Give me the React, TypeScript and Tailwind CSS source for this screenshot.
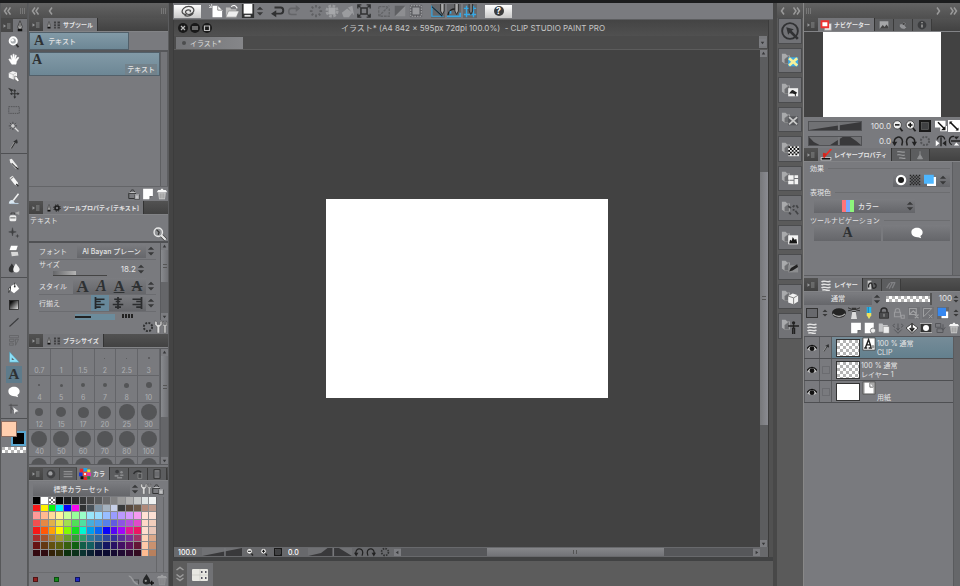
import React, { useState } from "react";
import clsx from "clsx";

const INK = "#303132";

const icons: Record<string, React.ReactNode> = {
  menu: (
    <>
      <path d="M1 4.500v7l5-3.500z" fill="#98999b" />
      <path d="M8 4h7M8 8h7M8 12h7" stroke="#98999b" strokeWidth="1.600" />
    </>
  ),
  magnifier: (
    <>
      <path d="M10 10l4 5" stroke={INK} strokeWidth="2.6" />
      <circle cx="7" cy="6.5" r="4.800" fill="#a9adb0" stroke="#fff" strokeWidth="2.600" />
      <circle cx="6" cy="5.5" r="1.8" fill="#fff" />
    </>
  ),
  hand: (
    <path
      d="M5 15L1 8.500l1.500-.800L5 9.500 3.500 3.500l1.400-.500 1.700 4.500V1.500h1.600v5.700l1.600-4.700 1.500.500L10 8.500l3.400-3.200 1.200 1L11.500 11l-.800 4z"
      fill="#fff"
      stroke="#fff"
      strokeWidth=".600"
    />
  ),
  cube: (
    <>
      <path d="M1 4l5-2.500L12 3v7l-5 2.500L1 10z" fill="#f4f4f4" />
      <path d="M1 4l6 2 5-3M7 6v6" stroke="#aaa" strokeWidth=".8" />
      <path d="M9 8l3 1 3 5-2 1.500-4-3z" fill="#fff" stroke="#555" strokeWidth=".8" />
    </>
  ),
  move: (
    <>
      <path d="M0 1l8 3-3 1.500 1 3z" fill={INK} />
      <path d="M9 4v10M4 9h10" stroke={INK} strokeWidth="1.300" />
      <path d="M9 2.500L7 5.500h4zM9 15.500l-2-3h4zM2.500 9l3-2v4zM15.500 9l-3-2v4z" fill={INK} />
    </>
  ),
  marquee: <path d="M1 3.500h14v9H1z" stroke="#4a4b4d" strokeDasharray="2 1" />,
  wand: (
    <>
      <path d="M6.500 1v11M1 6.500h11M2.500 2.500l8 8M10.500 2.500l-8 8" stroke="#3d3e40" />
      <circle cx="6.500" cy="6.500" r="2.400" fill="#ccc" />
      <path d="M9 9l5 5" stroke="#ddd" strokeWidth="1.6" />
    </>
  ),
  dropper: (
    <>
      <path d="M4 14l5-8" stroke="#aaa" strokeWidth="2" />
      <path d="M4.500 14l5-8" stroke={INK} strokeWidth="1.400" />
      <path d="M7 4.500l5 3 1-2-1-4-3 2z" fill={INK} />
    </>
  ),
  pen: (
    <>
      <path d="M2 2l3-1 7 9 2 5-4-1L3 6z" fill="#eee" />
      <path d="M5 7l5 5" stroke={INK} strokeWidth="1.400" />
      <path d="M10 12l4 3" stroke="#222" strokeWidth="1.500" />
    </>
  ),
  pencil: (
    <>
      <path d="M2 4l4-3 7 9 1 5-5-2z" fill="#f6f6f6" />
      <path d="M2.500 6.500l4.500-4" stroke="#888" strokeWidth="1.5" />
      <path d="M11 12l3 3" stroke={INK} strokeWidth="1.800" />
    </>
  ),
  brush: (
    <>
      <path d="M14 1L7 10" stroke="#f2f2f2" strokeWidth="2" />
      <path d="M1 14c1-5 4-5 6-4l2 3c-2 2-5 2-8 1z" fill="#dce9f3" />
      <path d="M4 14h10" stroke="#b8cbdb" strokeWidth="1.500" />
    </>
  ),
  airbrush: (
    <>
      <rect x="2" y="7" width="9" height="8" rx="2" fill="#eee" />
      <path d="M4 6V4h5v2M3 10.500h7" stroke={INK} />
      <path d="M9 4l6-2.500v5z" fill="#a9a9a9" />
    </>
  ),
  sparkle: (
    <>
      <path d="M6 1l1 4.500 4 1-4 1L6 12l-1-4.500-4-1 4-1z" fill="#3f4042" stroke="#3f4042" strokeWidth=".600" />
      <path d="M12.500 9l.700 2.300 2.300.700-2.300.700-.700 2.300-.700-2.300L9.500 12l2.300-.700z" fill="#3f4042" />
    </>
  ),
  eraser: (
    <>
      <path d="M4 1h9l-2 6H2z" fill="#fff" />
      <path d="M4 9h9l1 5-9 1z" fill="#d8d8d8" />
      <path d="M2 8h11" stroke="#666" />
    </>
  ),
  blend: (
    <>
      <path d="M5 2c3 4 4 6 4 8s-2 4-4 4-4-1-4-4 2-4 4-8z" fill={INK} />
      <path d="M10.500 2c3 4 5 6 5 8s-2 4-4.500 4-4-1-4-4 2-5 3.500-8z" fill="#f1f1f1" />
    </>
  ),
  bucket: (
    <>
      <path d="M3 6l7-4 5 7-7 6-4-3z" fill="#fff" />
      <path d="M9 5V1M3.500 6C0 9 0 11 1 14l2-4z" stroke={INK} strokeWidth="1.200" fill="#eee" />
      <circle cx="9" cy="6" r="1.200" fill={INK} />
    </>
  ),
  gradient: <rect x="2" y="2" width="12" height="12" fill="url(#toolGradient)" stroke="#222" />,
  line: <path d="M2 14L14 3" stroke="#3a3b3d" strokeWidth="1.400" />,
  frame: <path d="M2 2h12v3H2zM2 7h6v3H2zM2 12h5v3H2zM10 7h4l-4 8z" stroke="#606164" />,
  ruler: (
    <>
      <path d="M2 1v14h13z" fill="#8be0f8" stroke="#458da5" strokeWidth=".6" />
      <path d="M5 8.500V12h3.500z" fill="#5c6a70" />
    </>
  ),
  balloon: (
    <path d="M8 1c4 0 7.500 2.500 7.500 6 0 2.500-1 4-3 5l1 3-4-1.500C4 14 .500 11 .500 7s3.500-6 7.500-6z" fill="#fff" />
  ),
  vector: (
    <>
      <path d="M1 3h12M4 1v13M4 6l7 8" stroke="#454648" />
      <path d="M7 5.500l7 5.500-3.500.5-2 3z" fill="#eee" />
    </>
  ),
  lockbox: (
    <>
      <path d="M1 7h9v7H1zM3 7c0-6 6-6 6 0M9 9h6v6H9z" stroke={INK} strokeWidth="1.300" />
      <path d="M9 8h6v7H9z" fill="#9c9da0" />
      <path d="M2 6h8M11 10v4M13 10v4" stroke="#ddd" />
    </>
  ),
  page: (
    <>
      <path d="M1.500 1h13v9l-5 5h-8z" fill="#fff" />
      <path d="M10 15v-4.500h4.500z" fill="#67686b" />
    </>
  ),
  trash: (
    <>
      <path d="M3 6h10l-1 9H4z" fill="#cfcfcf" />
      <path d="M1 5.500h14l-2-3h-3L9 1H7L6 2.500H3z" fill="#f4f4f4" />
      <path d="M5.500 7v7M8 7v7M10.500 7v7" stroke="#777" />
    </>
  ),
  wrench: (
    <>
      <path d="M9 9l5.500 5.500" stroke="#333" strokeWidth="4" />
      <path d="M9 9l5.500 5.500" stroke="#e5e5e5" strokeWidth="2.500" />
      <circle cx="6" cy="6" r="4.800" stroke="#e6e6e6" strokeWidth="1.600" fill="#8f9194" />
      <path d="M4 3l3 3-1 3" stroke="#3a3a3a" strokeWidth="1.500" />
    </>
  ),
  spanner: (
    <>
      <path d="M1 1v4l2.500 3v7h3V8L9 5V1L7 2v3H3.500V2z" fill="#dedede" stroke="#444" strokeWidth=".500" />
      <path d="M11 1c-2 2-2 5 0 6v8h3V7c2-1 2-4 0-6v4h-3z" fill="#bdbdbd" stroke="#444" strokeWidth=".500" />
    </>
  ),
  ring: <circle cx="8" cy="8" r="5.500" stroke={INK} strokeWidth="2.600" strokeDasharray="2.600 1.700" />,
  gear: (
    <>
      <circle cx="8" cy="8" r="4" stroke="#1c1c1c" strokeWidth="3" />
      <circle cx="8" cy="8" r="6.500" stroke="#1c1c1c" strokeWidth="2" strokeDasharray="2.500 2.600" />
    </>
  ),
  grid: (
    <path
      d="M2 1h4v4H2zM9 1h5v4H9zM2 6.500h4v4H2zM9 6.500h5v4H9zM2 12h4v3H2zM9 12h5v3H9z"
      fill="#38393b"
      stroke="#66676a"
      strokeWidth=".600"
    />
  ),
  nib: (
    <>
      <path d="M8 1L5 9l1 3h4l1-3zM8 5v4" fill="#aaa" stroke="#333" />
      <path d="M5 12h6v3H5z" fill="#111" />
    </>
  ),
  newFile: (
    <>
      <path d="M4 2h6l5 5v8H4z" fill="#fff" />
      <path d="M10 2v5h5" stroke="#777" />
      <path d="M0 1l3 3M3 0v3M0 4h3" stroke="#ddd" />
    </>
  ),
  open: (
    <>
      <path d="M1 4h5l1 2h6v9H1z" fill="#bcbcbc" />
      <path d="M1 15l3-7h12l-3 7z" fill="#eee" stroke="#777" strokeWidth=".600" />
      <path d="M7 3c3-2 5-2 7 2" stroke="#fff" strokeWidth="1.300" />
    </>
  ),
  save: (
    <>
      <path d="M1 0h14v16H1z" fill={INK} />
      <path d="M3 0h10v11H3z" fill="#fff" />
      <path d="M4 13.500h7" stroke="#ddd" strokeWidth="2" />
    </>
  ),
  undo: (
    <>
      <path d="M4 4h7c4 0 4 7 0 7H5" stroke={INK} strokeWidth="2.200" />
      <path d="M0 11l6-4v8z" fill={INK} />
    </>
  ),
  redo: (
    <>
      <path d="M12 5H5c-4 0-4 7 0 7h6" stroke="#646568" strokeWidth="1.800" />
      <path d="M15 5l-5-4v8z" fill="#646568" />
    </>
  ),
  burst: (
    <path d="M8 1v3M8 12v3M1 8h3M12 8h3M3 3l2 2M11 11l2 2M13 3l-2 2M5 11l-2 2" stroke="#5e5f62" strokeWidth="2" />
  ),
  clearOut: (
    <>
      <circle cx="8" cy="8" r="6" stroke="#9b9c9f" strokeWidth="3" strokeDasharray="3 1.700" />
      <rect x="4" y="4" width="8" height="8" fill="#a6a7aa" />
    </>
  ),
  fill: <path d="M1 10l6-5 6 5-4 5H3zM8 4l5-2 2 11-3-4z" fill="#9b9c9f" />,
  scale: (
    <>
      <path d="M4.500 4.500h7v7h-7z" stroke={INK} strokeWidth="1.800" />
      <path
        d="M1 1l3 3M15 1l-3 3M1 15l3-3M15 15l-3-3M1 5V1h4M11 1h4v4M1 11v4h4M11 15h4v-4"
        stroke={INK}
        strokeWidth="1.600"
      />
    </>
  ),
  deselect: <path d="M2 3h10M2 3v11M14 5v9H4M2 14L14 2" stroke="#636467" strokeWidth="1.500" strokeDasharray="3 1" />,
  invert: (
    <>
      <path d="M2 14L14 2v12z" fill="#8d8e91" />
      <path d="M2 14V2h12z" fill="#5f6063" />
    </>
  ),
  border: (
    <>
      <path d="M1 1h14v14H1z" fill="#55565a" />
      <path d="M2 2h12v12H2z" stroke="#b9babd" strokeDasharray="2 1" />
      <rect x="4" y="4" width="8" height="8" fill="#999a9d" />
    </>
  ),
  snapRuler: (
    <>
      <path d="M1 3v11h12z" stroke="#36a8e5" strokeWidth="1.400" />
      <path d="M1 3l12 11" stroke="#222" strokeWidth="1.300" />
      <path d="M11 0v8l2 4 2-4V0" fill="#aaa" stroke="#222" />
    </>
  ),
  snapSpecial: (
    <>
      <path d="M1 13c1-6 5-8 10-7" stroke="#222" strokeWidth="1.500" />
      <path d="M0 14h15v-4M4 8v3" stroke="#36a8e5" strokeWidth="2" />
      <path d="M9 0v8l2 4 2-4V0" fill="#aaa" stroke="#222" />
    </>
  ),
  snapGrid: (
    <>
      <path d="M4 2v13M12 2v13M1 5h14M1 12h14" stroke="#36a8e5" strokeWidth="1.600" />
      <path d="M7 0v8l2 4 2-4V0" fill="#777" stroke="#222" />
    </>
  ),
  swirl: (
    <path
      d="M6 12C1 12 0 8 3 5s9-3 11 0-1 7-5 7-5-4-2-5 5 1 3 2M14 10c-1 3-6 5-10 3"
      stroke="#4a4a4a"
      strokeWidth="1.400"
    />
  ),
  updown: <path d="M8 1l5 5H3zM8 15l-5-5h10z" fill="#38393a" />,
  quick: (
    <>
      <circle cx="8" cy="8" r="6.300" stroke="#313234" strokeWidth="1.500" />
      <path d="M5 5l6 1.500-1.700 1.300L15 13.500 13.500 15 7.800 9.300 6.500 11z" fill="#313234" />
    </>
  ),
  zoomOut: (
    <>
      <path d="M10 10l4 5" stroke="#222" strokeWidth="2.500" />
      <circle cx="7" cy="6.500" r="5.500" fill="#eee" stroke="#333" />
      <path d="M4 6.500h6" stroke="#111" strokeWidth="2" />
    </>
  ),
  zoomIn: (
    <>
      <path d="M10 10l4 5" stroke="#222" strokeWidth="2.500" />
      <circle cx="7" cy="6.500" r="5.500" fill="#eee" stroke="#333" />
      <path d="M4 6.500h6M7 3.500v6" stroke="#111" strokeWidth="2" />
    </>
  ),
  square: (
    <>
      <rect width="16" height="16" fill="#191919" />
      <rect x="3" y="3" width="10" height="10" fill="#404143" stroke="#777" strokeWidth=".600" />
    </>
  ),
  fit: (
    <>
      <path d="M0 1h14v9H0zM7 8h9v7H7z" fill="#fff" />
      <path d="M4 3l9 9" stroke="#111" strokeWidth="2" />
      <path d="M14 13.500V8l-6 5.500z" fill="#111" />
    </>
  ),
  fitAll: (
    <>
      <path d="M0 0h16v16H0z" fill="#fff" />
      <path d="M3 3l10 10" stroke="#111" strokeWidth="2.200" />
      <path d="M2 2h4L2 6zM14 14h-4l4-4z" fill="#111" />
    </>
  ),
  rotL: (
    <>
      <path d="M3.500 12C0 2 14-1 14 9l-1 5" stroke="#222" strokeWidth="2" />
      <path d="M0 9l7 0-3.500 6z" fill="#222" />
    </>
  ),
  rotR: (
    <>
      <path d="M12.500 12C16 2 2-1 2 9l1 5" stroke="#222" strokeWidth="2" />
      <path d="M16 9l-7 0 3.500 6z" fill="#222" />
    </>
  ),
  flipH: (
    <>
      <path d="M3 6c1-6 9-6 10 0M8 3v12" stroke="#222" strokeWidth="1.800" />
      <path d="M1 7l5 4-5 4z" fill="#fff" />
      <path d="M15 7l-5 4 5 4z" fill="#222" />
    </>
  ),
  flipV: (
    <>
      <path d="M8 2C1 1 0 10 5 13M4 8h12" stroke="#222" strokeWidth="1.800" />
      <path d="M8 14l3-4 4 4z" fill="#fff" />
      <path d="M8 2l3 4 4-4z" fill="#222" />
    </>
  ),
  windows: (
    <>
      <path d="M6 6h9v9H6z" fill="#eee" stroke="#999" />
      <path d="M2 3h9v8H2z" fill="#fff" stroke="#ee3030" strokeWidth="2.400" />
    </>
  ),
  photo: (
    <>
      <path d="M1 2h14v12H1z" fill="#a5a6a8" />
      <path d="M1 14l5-6 3 3 3-4 3 4v3z" fill="#444" />
    </>
  ),
  blob: (
    <>
      <path d="M2 10c0-4 2-4 4-4l3-4 4 4-2 3 3 3-4 3-5-1z" fill="#939497" stroke="#4f5052" />
      <circle cx="9" cy="6" r="2" fill="#444" />
    </>
  ),
  info: (
    <>
      <circle cx="8" cy="8" r="7" fill="#3c3d3f" />
      <path d="M8 3v2M8 7v5" stroke="#999" strokeWidth="2.500" />
    </>
  ),
  redBrush: (
    <>
      <path d="M1 11h14v4H1z" fill="#fff" />
      <path d="M2 13h12" stroke="#111" strokeWidth="2.500" />
      <path d="M15 0L8 8" stroke="#ee2e24" strokeWidth="2.500" />
      <path d="M4 5c2 0 5 1 5 3l-3 4c-3-1-2-4-2-7z" fill="#d3261d" />
    </>
  ),
  stack: (
    <path
      d="M2 4c3-3 7 1 12-1M2 8c3-3 7 1 12-1M2 12c3-3 7 1 12-1M3 15c3-2 6 1 10 0"
      stroke="#e2e2e2"
      strokeWidth="2"
    />
  ),
  stackDim: (
    <path d="M2 3c4-2 8 2 12 0M2 8c4-2 8 2 12 0M5 13c4-2 6 2 10 0" stroke="#98999b" strokeWidth="2" />
  ),
  flask: <path d="M8 2v5L4 14h8L8 7" fill="#909193" stroke="#909193" strokeWidth="1.500" />,
  disc: (
    <>
      <circle cx="8" cy="8" r="7" fill="#fff" />
      <circle cx="8" cy="8" r="4" fill="#1c1c1c" />
    </>
  ),
  tone: (
    <path
      d="M1 2h14M1 6h14M1 10h14M1 14h14M3 4h12M3 8h12M3 12h12"
      stroke="#242424"
      strokeWidth="2"
      strokeDasharray="2 2"
    />
  ),
  layerColor: (
    <>
      <path d="M4 4h12v12H4z" fill="#fff" />
      <path d="M0 1h13v12H0z" fill="#4db6ff" />
    </>
  ),
  eye: (
    <>
      <path d="M0 9c4-7 12-7 16 0-4 5-12 5-16 0z" fill="#c6c6c6" />
      <path d="M0 9c4-7 12-7 16 0" stroke="#111" strokeWidth="2" />
      <circle cx="8" cy="9" r="3.900" fill="#111" />
    </>
  ),
  mask: (
    <>
      <ellipse cx="8" cy="8" rx="8" ry="5.500" fill="#242424" />
      <path d="M1 9c4 4 10 4 14 0" stroke="#aaa" strokeWidth="1.500" />
    </>
  ),
  lighthouse: (
    <>
      <path d="M6 5h4l2 11H4z" fill="#dcdcdc" />
      <path d="M5 1h6v3H5z" fill="#333" />
      <path d="M0 1l5 2M16 1l-5 2M0 5l5-1M16 5l-5-1M5.500 6h5" stroke="#333" strokeWidth="1.300" />
    </>
  ),
  draft: (
    <>
      <path d="M5 0h6v10l-3 6-3-6z" fill="#28b7ec" />
      <path d="M5 8h6v3l-3 5-3-5z" fill="#f1df5a" />
      <path d="M7 0v8" stroke="#1565a0" />
    </>
  ),
  lock: (
    <>
      <path d="M4 8V5c0-5 8-5 8 0v3" stroke="#2b2b2c" strokeWidth="2" />
      <path d="M2 7h12v8H2z" fill="#4a4b4d" stroke="#2b2b2c" />
      <path d="M8 9v4" stroke="#999" strokeWidth="1.500" />
    </>
  ),
  lockDim: (
    <path d="M3 7V5c0-4 6-4 6 0v2M2 7h8v6H2zM11 11h4v4h-4z" stroke="#9a9b9e" strokeWidth="1.500" />
  ),
  maskX: (
    <path d="M2 2h9v8H2zM3 9l4-4 4 4M9 10l5 5M14 10l-5 5" stroke="#9fa0a2" strokeWidth="1.500" />
  ),
  rulerX: <path d="M2 2v11L13 2zM9 10l5 5M14 10l-5 5" stroke="#9fa0a2" strokeWidth="1.300" />,
  blueLayer: (
    <>
      <path d="M6 6h9v9H6z" fill="#fff" />
      <path d="M1 1h11v11H1z" fill="#3788f0" />
    </>
  ),
  pageRound: (
    <>
      <path d="M1 1h12v9l-4 5H1z" fill="#fff" />
      <circle cx="12" cy="11.500" r="3.500" fill="#eee" stroke="#67686b" />
    </>
  ),
  folderNew: (
    <>
      <path d="M1 2h5l1 2h6v9H1z" fill="#c3c4c6" />
      <path d="M7 6h8v9H7z" fill="#eee" stroke="#666" strokeWidth=".500" />
    </>
  ),
  merge: (
    <path
      d="M4 7c-4-1-3-4 0-4M12 7c4-1 3-4 0-4M3 10l5 5 5-5M8 2v8M6 8l2 3 2-3"
      stroke="#55565a"
      strokeWidth="1.300"
    />
  ),
  mergeDown: (
    <>
      <path d="M0 8l8-6 8 6-8 7z" fill="#fff" stroke="#222" />
      <path d="M8 2v8M5 8l3 4 3-4" stroke="#222" strokeWidth="2" />
    </>
  ),
  maskCircle: (
    <>
      <path d="M0 2h16v12H0z" fill="#333" stroke="#ccc" />
      <circle cx="8" cy="8" r="4" fill="#fff" />
    </>
  ),
  apply: <path d="M2 2h7v5H2zM4 9h8v5H4zM12 3v7M9 7l3 4 3-4" stroke="#55565a" strokeWidth="1.300" />,
  textPage: (
    <>
      <path d="M1 1h14v14H1z" fill="#fff" stroke="#444" />
      <path d="M2.500 12.500h3.500M7.500 12.500h4M4 12l3.500-9 3 9M5 9h4" stroke="#222" strokeWidth="1.600" />
      <circle cx="12.500" cy="11" r="2" fill="#999" />
    </>
  ),
  paper: (
    <>
      <path d="M1 1h14v14H1z" fill="#aaa" stroke="#555" />
      <path d="M3 2h6l4 5v7H3z" fill="#fff" />
      <path d="M9 2v5h4" stroke="#555" />
    </>
  ),
  dots: (
    <>
      <circle cx="5" cy="4" r="3" fill="#3d3e40" />
      <circle cx="12" cy="5" r="2" fill="#8b8c8e" />
      <path d="M1 11h6M10 10h5M5 14h8" stroke="#8b8c8e" strokeWidth="2.500" />
    </>
  ),
  ball: (
    <>
      <circle cx="8" cy="8" r="7" fill="#404143" />
      <circle cx="7" cy="7" r="3.500" fill="#9d9ea0" />
    </>
  ),
  bars: <path d="M1 4h14M1 8h14M1 12h14" stroke="#8e8f91" strokeWidth="2" />,
  pallet: (
    <>
      <path d="M1 1h5v5H1zM6 12h5v4H6z" fill="#e5262a" />
      <path d="M6 0h5v5H6z" fill="#20a0e8" />
      <path d="M11 2h4v4h-4z" fill="#f0e020" />
      <path d="M0 6h5v5H0z" fill="#1838d0" />
      <path d="M5 5h6v6H5z" fill="#f04838" />
      <path d="M11 6h5v5h-5z" fill="#e830b0" />
      <path d="M2 11h4v4H2z" fill="#111" />
      <path d="M11 11h4v4h-4z" fill="#208040" />
      <circle cx="8" cy="8" r="1.500" fill="#fff" />
    </>
  ),
  dropAdd: (
    <>
      <path d="M6 0c3 5 5 7 5 10s-2 4-5 4-5-1-5-4 2-5 5-10z" fill="#252627" />
      <circle cx="5" cy="9" r="1.500" fill="#999" />
      <path d="M13 9v6M10 12h6" stroke="#111" strokeWidth="1.800" />
    </>
  ),
  film: (
    <>
      <path d="M3 1h10v14H3z" fill="#6b6c6f" stroke="#333" strokeWidth="1.500" />
      <path d="M5 3h6M5 13h6" stroke="#999" />
    </>
  ),
  sheets: (
    <>
      <path d="M1 8c2-5 8-6 12-3" stroke="#2f3031" strokeWidth="2.500" />
      <path d="M8 7h6v8H8z" fill="#4a4b4d" stroke="#999" />
    </>
  ),
  dim: (
    <>
      <path d="M1 3c3-1 4 3 6 6s4 5 8 5" stroke="#97989b" strokeWidth="2" />
      <path d="M8 8h6v6" stroke="#4d4e50" strokeWidth="1.500" />
    </>
  ),
  timeline: (
    <>
      <rect x="0" y="2" width="16" height="12" rx="1" fill="#e8e8e2" />
      <path d="M0 8h16M8 2v12" stroke="#c5c5c0" strokeWidth=".600" />
      <path d="M9 5h1.500M13 5h1.500M9 11h1.500M13 11h1.500" stroke="#223" strokeWidth="1.600" />
    </>
  ),
  loops: (
    <>
      <path d="M1 1h6v14H1z" fill="#ccc" />
      <path d="M3 12C1 6 7 2 8 7s0 7 4 6 3-8-1-7" stroke="#2b2b2c" strokeWidth="2.200" />
    </>
  ),
  waves: <path d="M1 13l5-8M5 14l5-9M10 13l4-8M7 4h8" stroke="#808184" strokeWidth="2" />,
  align: <path d="M2 0v16M3 3h11M3 6h6M3 10h11M3 13.500h6" stroke="#26292b" strokeWidth="2.300" />,
  alignMid: <path d="M8 0v16M3 3h10M5 6h6M1 10h14M4 13.500h8" stroke="#2b2c2e" strokeWidth="2.300" />,
  alignEnd: <path d="M14 0v16M2 3h11M7 6h6M2 10h11M7 13.500h6" stroke="#2b2c2e" strokeWidth="2.300" />,
};

const Icon = ({ name, className = "size-3" }: { name: string; className?: string }) => (
  <svg viewBox="0 0 16 16" fill="none" className={clsx("shrink-0", className)} aria-hidden="true">
    {icons[name]}
  </svg>
);

const IconButton = ({
  name,
  label,
  className,
  size,
}: {
  name: string;
  label: string;
  className?: string;
  size?: string;
}) => (
  <button aria-label={label} className={clsx("flex items-center justify-center shrink-0", className)}>
    <Icon name={name} className={size} />
  </button>
);

const Chevrons = ({ count = 2, right = false }: { count?: number; right?: boolean }) => (
  <svg viewBox="0 0 8 8" className={clsx("size-2", right && "rotate-180")} fill="none" aria-hidden="true">
    <path
      d={count === 2 ? "M4 0.500L1.500 4l2.500 3.500M7.500 0.500L5 4l2.500 3.500" : "M5 0.500L2.500 4l2.500 3.500"}
      stroke="#9b9b9b"
      strokeWidth="1.500"
    />
  </svg>
);

const Grip = () => (
  <div className="flex gap-px">
    {[0, 1, 2].map((i) => (
      <span key={i} className="w-px h-1.5 bg-[#777]" />
    ))}
  </div>
);

const TopStrip = ({ children }: { children: React.ReactNode }) => (
  <div className="h-[15px] shrink-0 flex items-center px-0.5 bg-linear-to-b from-[#636363] to-[#505050]">
    {children}
  </div>
);

const PanelTabs = ({
  title,
  tabIcons,
  before = [],
  after = [],
}: {
  title: string;
  tabIcons: string[];
  before?: string[];
  after?: string[];
}) => (
  <div className="h-3.5 shrink-0 flex items-end bg-linear-to-b from-[#525252] to-[#424242] border-b border-[#828386]">
    <button aria-label="メニュー" className="w-3.5 h-3 flex items-center justify-center">
      <Icon name="menu" className="size-2" />
    </button>
    {before.map((name) => (
      <button
        key={name}
        aria-label={name}
        className="w-[17px] h-3 border-r border-[#444] bg-[#5c5d5f] flex items-center justify-center"
      >
        <Icon name={name} className="size-2.5" />
      </button>
    ))}
    <button className="h-[13px] px-0.5 flex items-center bg-[#747579] text-[6px] font-semibold border-r border-[#333]">
      {tabIcons.map((name) => (
        <Icon key={name} name={name} className={tabIcons.length > 1 ? "size-2" : "size-3"} />
      ))}
      <span className="px-0.5">{title}</span>
    </button>
    {after.map((name) => (
      <button
        key={name}
        aria-label={name}
        className="w-[19px] h-3 border-r border-[#3b3b3b] bg-[#5c5d5f] flex items-center justify-center"
      >
        <Icon name={name} className="size-2.5" />
      </button>
    ))}
  </div>
);

const ArrowGlyph = ({ up = false }: { up?: boolean }) => (
  <svg viewBox="0 0 8 8" className={clsx("size-[7px] shrink-0 bg-[#7c7d81]", up && "rotate-180")} aria-hidden="true">
    <path d="M2 3h4L4 6z" fill="#38393b" />
  </svg>
);

const Scrollbar = ({ thumb }: { thumb: string }) => (
  <div className="w-2 shrink-0 flex flex-col bg-[#656669] border-l border-[#5a5b5e]">
    <ArrowGlyph up />
    <div className={clsx("bg-linear-to-r from-[#888a8e] to-[#707175] flex items-center justify-center", thumb)}>
      <span className="w-1 h-1 border-y border-[#555]" />
    </div>
    <div className="flex-1" />
    <ArrowGlyph />
  </div>
);

const LetterA = ({ className }: { className?: string }) => (
  <span className={clsx("font-['Liberation_Serif',serif] font-bold leading-none text-[#2e3133]", className)}>A</span>
);

const toolGroups = [
  {
    height: "h-[122px]",
    tools: ["magnifier", "hand", "cube", "move", "marquee", "wand", "dropper"],
  },
  {
    height: "h-[124px]",
    tools: ["pen", "pencil", "brush", "airbrush", "sparkle", "eraser", "blend"],
  },
  {
    height: "h-[141px]",
    tools: ["bucket", "gradient", "line", "frame", "ruler", "text", "balloon", "vector"],
  },
];

const checker =
  "bg-[repeating-conic-gradient(#ffffff_0_25%,#b4b4b4_0_50%)] bg-[length:6px_6px]";

const ToolBar = () => {
  const [active, setActive] = useState("text");
  return (
    <aside className="w-7 shrink-0 flex flex-col bg-[#797a7e] border-x border-[#57585a]">
      <TopStrip>
        <Chevrons />
        <div className="flex-1" />
        <Grip />
      </TopStrip>
      <div className="h-3.5 shrink-0 flex items-end bg-[#484848]">
        <button aria-label="メニュー" className="w-3 h-3 flex items-center justify-center">
          <Icon name="menu" className="size-2" />
        </button>
        <button aria-label="ツール" className="flex-1 h-[13px] bg-[#747579] flex items-center justify-center">
          <Icon name="nib" />
        </button>
      </div>
      {toolGroups.map((group) => (
        <div
          key={group.tools[0]}
          className={clsx("shrink-0 grid auto-rows-fr border-b border-[#4f5053] pt-px", group.height)}
        >
          {group.tools.map((name) => (
            <button
              key={name}
              aria-label={name}
              onClick={() => setActive(name)}
              className={clsx(
                "w-4 mx-auto flex items-center justify-center",
                active === name && "bg-[#5e7b8b]"
              )}
            >
              {name === "text" ? <LetterA className="text-[15px]" /> : <Icon name={name} />}
            </button>
          ))}
        </div>
      ))}
      <div className="relative h-[26px] mt-0.5">
        <button
          aria-label="サブカラー"
          className="absolute left-2.5 top-2.5 size-[15px] bg-black border-2 border-[#5aa6cf]"
        />
        <button
          aria-label="メインカラー"
          className="absolute left-0 top-0 size-4 bg-[#ffceae] border border-[#8b6c60]"
        />
      </div>
      <button aria-label="透明色" className={clsx("h-1.5 mx-px", checker)} />
    </aside>
  );
};

const SubToolPanel = () => (
  <section className="flex flex-col h-[183px] shrink-0">
    <PanelTabs title="サブツール" tabIcons={["nib", "grid"]} />
    <div className="h-5 flex border-b-2 border-[#56575a]">
      <button className="w-[100px] px-1 flex items-center gap-1 bg-linear-to-b from-[#829aa7] to-[#6d8795] border border-[#52606a] font-medium">
        <LetterA className="text-[14px]" />
        テキスト
      </button>
    </div>
    <div className="flex-1 flex">
      <div className="flex-1">
        <button className="w-full h-6 px-0.5 flex justify-between bg-linear-to-b from-[#829aa7] to-[#6d8795] border border-[#52606a] font-medium">
          <LetterA className="text-[14px]" />
          <span className="self-end px-0.5 bg-[#73828b] leading-[11px]">テキスト</span>
        </button>
      </div>
      <div className="w-2 border-x border-[#5e5f62] bg-[#747579]" />
    </div>
    <div className="h-[15px] flex items-center justify-end gap-0.5 border-t border-[#646568]">
      <IconButton name="lockbox" label="ロック" />
      <IconButton name="page" label="複製" />
      <IconButton name="trash" label="削除" />
    </div>
  </section>
);

const propRow = "flex items-center h-[17px] border-b border-[#6b6c70]";
const raised = "bg-linear-to-b from-[#7b7c80] to-[#65666a]";

const ToolPropertyPanel = () => (
  <section className="flex flex-col h-[133px] shrink-0">
    <PanelTabs title="ツールプロパティ[テキスト]" tabIcons={["nib", "gear"]} />
    <div className="h-[28px] flex justify-between px-px border-b-2 border-[#505154]">
      <span className="pt-px">テキスト</span>
      <IconButton name="wrench" label="確認" className="self-end" size="size-3.5" />
    </div>
    <div className="flex-1 min-h-0 flex overflow-hidden">
      <div className="flex-1 min-w-0 pl-2.5 pr-1">
        <div className={propRow}>
          <label htmlFor="font" className="w-[38px]">フォント</label>
          <select id="font" className={clsx("appearance-none flex-1 min-w-0 h-3.5 text-center font-medium", raised)}>
            <option>Al Bayan プレーン</option>
          </select>
          <Icon name="updown" className="size-2.5" />
        </div>
        <div className="flex items-center h-[18px]">
          <label htmlFor="size" className="w-[14px] whitespace-nowrap self-start">サイズ</label>
          <input
            type="range"
            aria-label="サイズ"
            defaultValue={40}
            className="appearance-none self-end mb-0.5 w-[54px] h-[5px] bg-linear-to-r from-[#66676a] to-[#b4b4b4] bg-[length:23px_5px] bg-no-repeat border-b border-[#444] [&::-webkit-slider-thumb]:appearance-none"
          />
          <input id="size" defaultValue="18.2" className="flex-1 min-w-0 text-right text-[8px]" />
          <Icon name="updown" className="size-2.5 mr-2.5" />
        </div>
        <div className={propRow}>
          <span className="w-[34px]">スタイル</span>
          <div className={clsx("flex-1 h-full flex items-center justify-around", raised)}>
            <button aria-label="太字"><LetterA className="text-[17px]" /></button>
            <button aria-label="斜体"><LetterA className="text-[16px] italic" /></button>
            <button aria-label="下線"><LetterA className="text-[15px] underline" /></button>
            <button aria-label="取り消し線"><LetterA className="text-[15px] line-through" /></button>
          </div>
          <Icon name="updown" className="size-2.5" />
        </div>
        <div className={propRow}>
          <span className="w-[52px]">行揃え</span>
          <div className={clsx("flex-1 h-full flex", raised)}>
            <IconButton name="align" label="左揃え" className="flex-1 bg-[#67889a]" />
            <IconButton name="alignMid" label="中央揃え" className="flex-1" />
            <IconButton name="alignEnd" label="右揃え" className="flex-1" />
          </div>
          <Icon name="updown" className="size-2.5" />
        </div>
        <div className="flex pl-9 pt-0.5">
          <button aria-label="横書き" className="w-10 h-2 bg-[#6c8c9c] flex items-start">
            <span className="w-4 h-1 border-b-2 border-[#222]" />
          </button>
          <button aria-label="縦書き" className="w-6 h-2 flex gap-px justify-center">
            {[0, 1, 2, 3].map((i) => (
              <span key={i} className="w-0.5 h-1 bg-[#222]" />
            ))}
          </button>
        </div>
      </div>
      <Scrollbar thumb="h-8" />
    </div>
    <div className="h-3.5 flex items-center justify-end">
      <IconButton name="ring" label="初期化" />
      <IconButton name="spanner" label="詳細" size="size-3.5" />
    </div>
  </section>
);

const brushSizes = [
  { label: "0.7", dot: "size-0" },
  { label: "1", dot: "size-0" },
  { label: "1.5", dot: "size-0" },
  { label: "2", dot: "size-px" },
  { label: "2.5", dot: "size-px" },
  { label: "3", dot: "size-0.5" },
  { label: "4", dot: "size-0.5" },
  { label: "5", dot: "size-[3px]" },
  { label: "6", dot: "size-1" },
  { label: "7", dot: "size-1" },
  { label: "8", dot: "size-[5px]" },
  { label: "10", dot: "size-1.5" },
  { label: "12", dot: "size-2" },
  { label: "15", dot: "size-2.5" },
  { label: "17", dot: "size-[11px]" },
  { label: "20", dot: "size-[13px]" },
  { label: "25", dot: "size-4" },
  { label: "30", dot: "size-4" },
  { label: "40", dot: "size-4" },
  { label: "50", dot: "size-4" },
  { label: "60", dot: "size-4" },
  { label: "70", dot: "size-4" },
  { label: "80", dot: "size-4" },
  { label: "100", dot: "size-4" },
];

const BrushSizePanel = () => (
  <section className="flex flex-col h-[133px] shrink-0">
    <PanelTabs title="ブラシサイズ" tabIcons={["nib", "grid"]} />
    <div className="flex-1 min-h-0 flex mb-0.5 border-y border-[#5b5c5f]">
      <div className="flex-1 grid grid-cols-6 auto-rows-[27px] content-start overflow-hidden">
        {brushSizes.map((size) => (
          <button
            key={size.label}
            className="flex flex-col items-center border-r border-b border-[#646569] text-[#aeb0b3]"
          >
            <span className="h-[18px] flex items-center">
              <span className={clsx("rounded-full bg-[#545557]", size.dot)} />
            </span>
            <span className="leading-[7px]">{size.label}</span>
          </button>
        ))}
        {["150", "200", "250", "300", "400", "500"].map((size) => (
          <button key={size} aria-label={size} className="flex flex-col items-center pt-px border-r border-[#646569]">
            <span className="size-4 rounded-full bg-[#545557]" />
          </button>
        ))}
      </div>
      <Scrollbar thumb="h-[61px]" />
    </div>
  </section>
);

const palette = [
  "#000000 #ffffff checker #090a0a #1b1c1e #29292b #373839 #484848 #58595a #6b6b6c #818182 #9a9a9a #b0b0b0 #c6c8c8 #dfe3e3 #f0f2f2",
  "#f81818 #fff000 #08f810 #00f4f4 #0404f8 #f808f0 #303233 #485158 #8095a6 #a5b2bf #c6cfe8 #383a3b #56483d #695848 #b18979 #bd9b8d",
  "#ff9a98 #ffb990 #ffda99 #fff49d #cbff9c #98ff9b #9affc7 #98e5fa #9adcff #98bdff #999cff #bb99ff #d499ff #f59af0 #ffe1d4 #fce0d4",
  "#f05050 #e58846 #dfb14b #e8e650 #a0df50 #50df58 #50dfa0 #48addb #4f9dea #5780e9 #625be0 #8d55e2 #b450df #e04aca #ffd9c8 #f2cebc",
  "#f71818 #ff5808 #ffa008 #fff500 #80fa04 #12df20 #00f8d0 #009eec #0865f4 #0904f9 #5606f4 #a008f8 #e31894 #ec1564 #ffdfcf #e9c7b9",
  "#a82d2d #a35530 #a97b34 #a39a31 #689c30 #319c34 #2f9b68 #2d7a9b #30679d #30479b #36319a #59309b #7b309b #a03368 #ffd4b8 #daa88a",
  "#661313 #643812 #62500f #5b600f #37600f #116112 #125d49 #125f61 #153663 #151662 #291264 #431164 #60125f #641536 #ffcaa8 #c99270",
  "#340910 #300b10 #332208 #33300b #0b300c #0b3019 #0b3230 #0b2032 #0c0c31 #0b0b31 #160b32 #210b33 #300b30 #330b20 #ffbb90 #b8805d",
];

const ColorSetPanel = () => (
  <section className="flex-1 flex flex-col min-h-0">
    <PanelTabs title="カラ" tabIcons={["pallet"]} before={["ball", "bars"]} after={["dots", "sheets", "film"]} />
    <div className="h-4 flex items-center px-1">
      <select
        aria-label="カラーセット"
        className={clsx("appearance-none flex-1 min-w-0 h-3.5 text-center font-medium", raised)}
      >
        <option>標準カラーセット</option>
      </select>
      <Icon name="updown" className="size-2.5" />
      <IconButton name="spanner" label="編集" />
      <IconButton name="lockbox" label="ロック" />
    </div>
    <div className="flex-1 flex pl-1">
      <div className="w-[123px] h-[59px] grid grid-cols-16 gap-px bg-[#8d8e91]">
        {palette.flatMap((row, r) =>
          row.split(" ").map((color, c) => (
            <button
              key={`${r}-${c}`}
              aria-label={color}
              className={clsx(
                color === "checker" &&
                  "bg-[repeating-conic-gradient(#ffffff_0_25%,#777777_0_50%)] bg-[length:4px_4px]"
              )}
              style={color === "checker" ? undefined : { backgroundColor: color }}
            />
          ))
        )}
      </div>
      <div className="w-2 ml-auto mr-1 border-x border-[#66676a]" />
    </div>
    <div className="h-3.5 flex items-center pl-1 border-t border-[#6b6c6f]">
      <button aria-label="赤" className="size-[5px] bg-[#922020] border border-[#501414]" />
      <button aria-label="緑" className="size-[5px] ml-4 bg-[#148a18] border border-[#0c4c10]" />
      <button aria-label="青" className="size-[5px] ml-4 bg-[#2028c0] border border-[#101460]" />
      <div className="flex-1" />
      <IconButton name="dim" label="置換" className="mr-0.5" />
      <IconButton name="dropAdd" label="追加" className="mr-0.5" />
      <IconButton name="trash" label="削除" className="opacity-30" />
    </div>
  </section>
);

const toolbarItems = [
  { name: "newFile", gap: "ml-2" },
  { name: "open", gap: "ml-0.5" },
  { name: "save", gap: "ml-0.5" },
  { name: "updown", gap: "" },
  { name: "undo", gap: "ml-1.5" },
  { name: "redo", gap: "ml-0.5" },
  { name: "burst", gap: "ml-2" },
  { name: "clearOut", gap: "ml-0.5" },
  { name: "fill", gap: "ml-0.5" },
  { name: "scale", gap: "ml-0.5" },
  { name: "deselect", gap: "ml-1.5" },
  { name: "invert", gap: "ml-0.5" },
  { name: "border", gap: "ml-0.5" },
  { name: "snapRuler", gap: "ml-2" },
  { name: "snapSpecial", gap: "ml-0.5" },
  { name: "snapGrid", gap: "ml-0.5" },
];

const CommandBar = () => (
  <div className="h-[17px] shrink-0 flex items-center pl-px bg-[#7a7b7f] border-b border-[#5c5d5f]">
    <button
      aria-label="CLIP STUDIO"
      className="w-[27px] h-[13px] bg-linear-to-b from-white to-[#c9c9c9] flex items-center justify-center"
    >
      <Icon name="swirl" className="size-3.5" />
    </button>
    {toolbarItems.map(({ name, gap }) => (
      <IconButton
        key={name}
        name={name}
        label={name}
        size={name === "updown" ? "size-2.5" : "size-3.5"}
        className={clsx(gap, name.startsWith("snap") && "bg-[#66676a]")}
      />
    ))}
    <button
      aria-label="ヘルプ"
      className="w-[27px] h-[13px] ml-2 bg-linear-to-b from-white to-[#c9c9c9] flex items-center justify-center"
    >
      <span className="size-2.5 rounded-full bg-[#3c3d3e] text-white text-[9px] leading-[10px] font-bold">?</span>
    </button>
  </div>
);

const WindowButton = ({ label, path }: { label: string; path: string }) => (
  <button aria-label={label} className="size-2.5 rounded-full bg-[#191919] flex items-center justify-center">
    <svg viewBox="0 0 8 8" className="size-2" fill="none" aria-hidden="true">
      <path d={path} stroke="#bbb" strokeWidth="1.200" />
    </svg>
  </button>
);

const Wedge = ({ label, shape, className }: { label: string; shape: string; className?: string }) => (
  <div className={clsx("relative shrink-0 bg-[#707174]", className)}>
    <svg viewBox="0 0 54 8" preserveAspectRatio="none" className="size-full" aria-hidden="true">
      <path d={shape} fill="#39393b" />
      <path d="M31 0v8" stroke="#77787b" strokeWidth="2" />
    </svg>
    <input type="range" aria-label={label} className="absolute inset-0 size-full opacity-0" />
  </div>
);

const rampShape = "M0 8L54 0v8z";
const waveShape = "M0 0l5 5 6 3h11l8-5 5-3h8l6 4 5 4H0z";

const Workspace = () => (
  <main className="flex-1 min-w-0 flex flex-col">
    <CommandBar />
    <div className="flex-1 min-h-0 flex flex-col mr-1 border-x border-[#3c3c3c] bg-[#4b4b4b]">
      <div className="h-4 shrink-0 flex items-center px-1 gap-0.5 bg-linear-to-b from-[#444] to-[#505050]">
        <WindowButton label="閉じる" path="M2 2l4 4M6 2L2 6" />
        <WindowButton label="最小化" path="M1 3h6M1 5h6" />
        <WindowButton label="最大化" path="M1.500 2h5v4.500h-5z" />
        <h1 className="flex-1 text-center text-[8px] leading-3 text-[#c6c6c6] whitespace-pre pr-8">
          イラスト* (A4 842 x 595px 72dpi 100.0%)  - CLIP STUDIO PAINT PRO
        </h1>
      </div>
      <div className="h-3.5 shrink-0 flex items-start justify-between border-b border-[#5c5c5c]">
        <button className="w-[67px] h-3 ml-0.5 mt-px px-1.5 flex items-center gap-1 bg-linear-to-r from-[#737477] to-[#858689] text-[#dedede]">
          <span className="size-1 rounded-full bg-[#4c4d4e]" />
          イラスト*
        </button>
        <button aria-label="タブ一覧" className="w-2 h-3 mr-px bg-[#77787b] flex items-center">
          <ArrowGlyph />
        </button>
      </div>
      <div className="flex-1 min-h-0 flex">
        <div className="flex-1 flex items-center justify-center bg-[#424242]">
          <div className="w-[282px] h-[199px] bg-white" />
        </div>
        <div className="w-2 flex flex-col bg-[#5c5d5f]">
          <ArrowGlyph up />
          <div className="flex-[115]" />
          <div className="flex-[252] bg-linear-to-r from-[#77787b] to-[#8a8b91] flex items-center justify-center">
            <span className="w-1 h-1 border-y border-[#555]" />
          </div>
          <div className="flex-[115]" />
          <ArrowGlyph />
        </div>
      </div>
      <div className="h-2.5 shrink-0 flex items-center pl-1 bg-[#68696c]">
        <input aria-label="表示倍率" defaultValue="100.0" className="w-6 min-w-0 font-medium text-white" />
        <Wedge label="倍率" shape={rampShape} className="w-10 h-2" />
        <IconButton name="zoomOut" label="縮小" size="size-2" className="ml-1" />
        <IconButton name="zoomIn" label="拡大" size="size-2" className="ml-1.5" />
        <IconButton name="square" label="全体表示" size="size-2" className="ml-1.5" />
        <input aria-label="表示角度" defaultValue="0.0" className="w-5 ml-1.5 min-w-0 font-medium text-white" />
        <Wedge label="角度" shape="M0 8L16 5l8-5h14l16 8z" className="w-11 h-2" />
        <IconButton name="rotL" label="左回転" size="size-2.5" className="ml-0.5" />
        <IconButton name="rotR" label="右回転" size="size-2.5" className="ml-0.5" />
        <IconButton name="ring" label="回転をリセット" size="size-2.5" className="ml-1 mr-1" />
        <span className="rotate-90"><ArrowGlyph /></span>
        <div className="flex-1 h-2 flex bg-[#56575a]">
          <div className="flex-[86]" />
          <div className="flex-[178] bg-linear-to-b from-[#86878a] to-[#727377] flex items-center justify-center">
            <span className="w-1 h-1 border-x border-[#555]" />
          </div>
          <div className="flex-[90]" />
        </div>
        <span className="-rotate-90 mr-2"><ArrowGlyph /></span>
      </div>
    </div>
    <div className="h-[29px] shrink-0 flex border-t-4 border-[#414243] bg-[#5c5c5c]">
      <div className="w-3.5 flex flex-col items-center justify-between py-1">
        <span className="rotate-90"><Chevrons count={1} /></span>
        <span className="-rotate-90"><Chevrons /></span>
      </div>
      <button aria-label="タイムライン" className="w-[26px] mt-0.5 bg-[#717275] flex items-center justify-center">
        <Icon name="timeline" className="size-4" />
      </button>
    </div>
  </main>
);

const dockItems: { label: string; badge: React.ReactNode }[] = [
  { label: "クイックアクセス", badge: null },
  {
    label: "素材",
    badge: (
      <>
        <rect x="8" y="7" width="11" height="10" fill="#3dabe5" />
        <path d="M9 8l9 8M18 8l-9 8" stroke="#f7f099" strokeWidth="3" />
      </>
    ),
  },
  {
    label: "カラーパターン",
    badge: (
      <>
        <rect x="8" y="8" width="11" height="9" fill="#f0f0f0" />
        <path d="M9 14c3-4 3-5 6-3l3 2-2 2-3-1z" fill="#222" />
        <path d="M16 13v4" stroke="#222" />
      </>
    ),
  },
  {
    label: "効果線",
    badge: (
      <>
        <path d="M8 7h11v10H8z" fill="#55565a" />
        <path d="M9 8l9 8M18 8l-9 8" stroke="#c9c9c9" strokeWidth="2" />
      </>
    ),
  },
  {
    label: "トーン",
    badge: (
      <>
        <rect x="8" y="7" width="12" height="11" fill="#eee" />
        <path d="M8 8h12M8 12h12M8 16h12M10 10h10M10 14h10" stroke="#111" strokeWidth="2" strokeDasharray="2 2" />
      </>
    ),
  },
  {
    label: "コマ割り",
    badge: <path d="M8 7h6v5H8zM15 7h4v3h-4zM15 11h4v6h-4zM8 13h6v4H8z" fill="#f3f3f3" />,
  },
  {
    label: "画像素材",
    badge: (
      <path
        d="M8 8l3 2M17 7l2 3M9 15l2 2M16 13l3 4M13 9l2-2M13 12h2"
        stroke="#434446"
        strokeWidth="2"
      />
    ),
  },
  {
    label: "シルエット",
    badge: (
      <>
        <rect x="8" y="7" width="11" height="10" fill="#f3f3f3" />
        <path d="M9 16l1-4 2 1 1-4 2 3 2-1 1 5z" fill="#161616" />
      </>
    ),
  },
  {
    label: "ブラシ",
    badge: (
      <>
        <path d="M8 8h11v8H8z" fill="#8d8e90" />
        <path d="M9 15l2-4 7-4 1 3-6 4z" fill="#222" />
      </>
    ),
  },
  {
    label: "3D",
    badge: (
      <>
        <path d="M8 9l5-3 6 2v7l-5 3-6-2z" fill="#f0f0f0" />
        <path d="M8 9l6 2 5-3M14 11v7" stroke="#777" />
      </>
    ),
  },
  {
    label: "ポーズ",
    badge: (
      <>
        <circle cx="14" cy="6.500" r="1.800" fill="#222" />
        <path d="M8 10h12M14 8v5M13 12v7M15 12v7" stroke="#222" strokeWidth="1.600" />
      </>
    ),
  },
];

const MaterialDock = () => (
  <nav className="w-[30px] shrink-0 flex flex-col bg-[#5a5a5a] border-l-4 border-[#484848]">
    <TopStrip>
      <Chevrons count={1} />
      <div className="flex-1" />
      <Chevrons right />
    </TopStrip>
    <div className="h-[321px] grid auto-rows-fr gap-1 px-px">
      {dockItems.map((item) => (
        <button
          key={item.label}
          aria-label={item.label}
          className="flex items-center justify-center bg-[#717276] border border-[#4b4c4e]"
        >
          {item.badge ? (
            <svg viewBox="0 0 20 20" className="size-[18px]" fill="none" aria-hidden="true">
              <path d="M1 3h4l2 2h3v9H4l-3-2z" fill="#a9aaac" />
              <path d="M4 9l5-4v9H4z" fill="#6d6e71" stroke="#8f9092" strokeWidth=".500" />
              {item.badge}
            </svg>
          ) : (
            <Icon name="quick" className="size-5" />
          )}
        </button>
      ))}
    </div>
  </nav>
);

const NavigatorPanel = () => (
  <section className="h-[130px] shrink-0 flex flex-col">
    <PanelTabs title="ナビゲーター" tabIcons={["windows"]} after={["photo", "blob", "info"]} />
    <div className="flex-1 flex justify-center bg-[#424242]">
      <div className="w-[76%] bg-white" />
    </div>
    <div className="h-[31px] pl-1 pt-0.5 flex flex-col gap-px">
      <div className="h-3.5 flex items-center">
        <Wedge label="倍率" shape={rampShape} className="w-[52px] h-2 border border-[#515255] box-content" />
        <input aria-label="倍率の値" defaultValue="100.0" className="flex-1 min-w-0 text-right text-[8px]" />
        <IconButton name="zoomOut" label="縮小" className="ml-px" />
        <IconButton name="zoomIn" label="拡大" className="ml-px" />
        <IconButton name="square" label="100%" className="ml-0.5" />
        <IconButton name="fit" label="フィッティング" className="ml-1" />
        <IconButton name="fitAll" label="全体表示" className="ml-px" />
      </div>
      <div className="h-3.5 flex items-center">
        <Wedge label="角度" shape={waveShape} className="w-[52px] h-2 border border-[#515255] box-content" />
        <input aria-label="角度の値" defaultValue="0.0" className="flex-1 min-w-0 text-right text-[8px]" />
        <IconButton name="rotL" label="左回転" className="ml-px" />
        <IconButton name="rotR" label="右回転" className="ml-px" />
        <IconButton name="ring" label="回転をリセット" className="ml-0.5 opacity-50" />
        <IconButton name="flipH" label="左右反転" className="ml-1" />
        <IconButton name="flipV" label="上下反転" className="ml-px" />
      </div>
    </div>
  </section>
);

const Heading = ({ children }: { children: React.ReactNode }) => (
  <h2 className="flex items-center gap-1 h-2.5">
    {children}
    <span className="flex-1 h-px bg-[#6c6d70]" />
  </h2>
);

const LayerPropertyPanel = () => (
  <section className="h-[130px] shrink-0 flex flex-col">
    <PanelTabs title="レイヤープロパティ" tabIcons={["redBrush"]} after={["stackDim", "flask"]} />
    <div className="flex-1 flex mb-0.5 border-b border-[#5d5e61]">
      <div className="flex-1 min-w-0 pl-1.5 pr-0.5 pt-px">
        <Heading>効果</Heading>
        <div className={clsx("w-[57px] h-3.5 ml-auto flex items-center justify-between px-0.5", raised)}>
          <IconButton name="disc" label="境界効果" />
          <IconButton name="tone" label="トーン" />
          <IconButton name="layerColor" label="レイヤーカラー" />
          <Icon name="updown" className="size-2.5" />
        </div>
        <Heading>表現色</Heading>
        <div className={clsx("w-[101px] h-3.5 my-0.5 ml-1 flex items-center", raised)}>
          <div className="w-3 h-3 ml-7 flex shrink-0">
            <span className="flex-1 bg-[#ff7479]" />
            <span className="flex-1 bg-[#78a9ff]" />
            <span className="flex-1 bg-[#8df57c]" />
          </div>
          <select aria-label="表現色" className="appearance-none flex-1 min-w-0 pl-1 font-medium">
            <option>カラー</option>
          </select>
          <Icon name="updown" className="size-2.5" />
        </div>
        <Heading>ツールナビゲーション</Heading>
        <div className="flex gap-0.5 pl-1">
          <button aria-label="テキスト" className={clsx("flex-1 h-4", raised)}>
            <LetterA className="text-[14px]" />
          </button>
          <button aria-label="フキダシ" className={clsx("flex-1 h-4 flex items-center justify-center", raised)}>
            <Icon name="balloon" />
          </button>
        </div>
      </div>
      <div className="w-2 border-l border-[#5d5e61] bg-[#6c6d70]" />
    </div>
  </section>
);

const layers = [
  { blend: "100 % 通常", name: "CLIP", icon: "textPage", active: true, thumb: checker },
  { blend: "100 % 通常", name: "レイヤー 1", icon: "", active: false, thumb: checker },
  { blend: "", name: "用紙", icon: "paper", active: false, thumb: "bg-white" },
];

const LayerPanel = () => (
  <section className="flex-1 min-h-0 flex flex-col">
    <PanelTabs title="レイヤー" tabIcons={["stack"]} after={["loops", "waves"]} />
    <div className="h-[13px] flex items-center">
      <select
        aria-label="合成モード"
        className={clsx("appearance-none w-[68px] h-3 text-center font-medium", raised)}
      >
        <option>通常</option>
      </select>
      <Icon name="updown" className="size-2.5" />
      <input
        type="range"
        aria-label="不透明度"
        defaultValue={100}
        className={clsx(
          "appearance-none ml-1 flex-1 min-w-0 h-1.5 [&::-webkit-slider-thumb]:appearance-none [&::-webkit-slider-thumb]:w-0.5 [&::-webkit-slider-thumb]:h-3 [&::-webkit-slider-thumb]:bg-[#555]",
          checker
        )}
      />
      <input aria-label="不透明度の値" defaultValue="100" className="w-5 text-right text-[8px]" />
      <Icon name="updown" className="size-2" />
    </div>
    <div className="h-[15px] flex items-center justify-between pl-0.5">
      <button aria-label="パレットカラー" className="w-3 h-2.5 border border-[#333] bg-[#68696d]" />
      <Icon name="updown" className="size-2" />
      <IconButton name="mask" label="マスク" size="size-3.5" />
      <IconButton name="lighthouse" label="参照レイヤー" />
      <IconButton name="draft" label="下描き" />
      <IconButton name="lock" label="ロック" />
      <IconButton name="lockDim" label="透明ピクセルをロック" />
      <IconButton name="maskX" label="マスクを有効化" className="bg-[#717276]" />
      <IconButton name="rulerX" label="定規の表示範囲" className="bg-[#717276]" />
      <IconButton name="blueLayer" label="レイヤーカラー" className="bg-[#66676a]" />
      <Icon name="updown" className="size-2" />
    </div>
    <div className="h-[17px] flex items-center pl-0.5 gap-0.5 border-b border-[#55565a]">
      <IconButton name="stack" label="表示切り替え" className="mr-auto" />
      <IconButton name="page" label="新規ラスターレイヤー" />
      <IconButton name="pageRound" label="新規ベクターレイヤー" />
      <IconButton name="folderNew" label="新規フォルダー" />
      <IconButton name="merge" label="転写" />
      <IconButton name="mergeDown" label="結合" />
      <IconButton name="maskCircle" label="マスク作成" />
      <IconButton name="apply" label="マスク適用" />
      <IconButton name="trash" label="レイヤーを削除" />
    </div>
    <div className="flex-1 min-h-0 flex">
      <ul className="flex-1 min-w-0 bg-[#797a7e]">
        {layers.map((layer) => (
          <li key={layer.name} className="h-[22px] flex border-b border-[#4e4f52]">
            <button aria-label="表示" className="w-4 flex items-center justify-center border-x border-[#5b5c5f]">
              <Icon name="eye" className="size-2.5" />
            </button>
            <button
              aria-label="描画対象"
              className="w-3 flex items-center justify-center border-r border-[#5b5c5f]"
            >
              {layer.active ? (
                <Icon name="dropper" className="size-2.5" />
              ) : (
                <span className="size-2 border border-[#6b6c70]" />
              )}
            </button>
            <button
              className={clsx(
                "flex-1 min-w-0 flex items-center pl-1 text-left leading-[9px]",
                layer.active && "bg-linear-to-b from-[#768c98] to-[#63808e]"
              )}
            >
              <span className={clsx("w-6 h-[18px] shrink-0 border border-[#333]", layer.thumb)} />
              {layer.icon && <Icon name={layer.icon} className="size-3.5 ml-0.5 self-start" />}
              <span className={clsx("flex flex-col ml-px", !layer.blend && "self-end")}>
                {layer.blend && <span>{layer.blend}</span>}
                <span>{layer.name}</span>
              </span>
            </button>
          </li>
        ))}
      </ul>
      <div className="w-[7px] bg-[#66676a] border-l border-[#5a5b5e]" />
    </div>
  </section>
);

const App = () => {
  return (
    <div className="h-screen min-h-[586px] flex flex-col overflow-hidden bg-[#515151] text-[7px] leading-[9px] text-[#e4e4e5] font-[Inter,'Noto_Sans_CJK_JP',sans-serif]">
      <svg className="absolute size-0" aria-hidden="true">
        <linearGradient id="toolGradient" x1="0" y1="0" x2="1" y2="1">
          <stop offset="0.2" stopColor="#111" />
          <stop offset="1" stopColor="#eee" />
        </linearGradient>
      </svg>
      <div className="h-[3px] shrink-0 bg-[#1b1c1d]" />
      <div className="flex-1 min-h-0 flex">
        <ToolBar />
        <aside className="w-[141px] shrink-0 flex flex-col bg-[#797a7e] border-x border-[#5b5c5e]">
          <TopStrip>
            <Chevrons />
            <span className="ml-2"><Chevrons count={1} /></span>
            <div className="flex-1" />
            <Grip />
          </TopStrip>
          <SubToolPanel />
          <ToolPropertyPanel />
          <BrushSizePanel />
          <ColorSetPanel />
        </aside>
        <div className="w-1 shrink-0 bg-[#444]" />
        <Workspace />
        <MaterialDock />
        <aside className="w-[157px] shrink-0 flex flex-col bg-[#797a7e] border-l border-[#888]">
          <TopStrip>
            <Grip />
            <div className="flex-1" />
            <span className="mr-2"><Chevrons count={1} right /></span>
            <Chevrons right />
          </TopStrip>
          <NavigatorPanel />
          <LayerPropertyPanel />
          <LayerPanel />
        </aside>
      </div>
    </div>
  );
};

export default App;
